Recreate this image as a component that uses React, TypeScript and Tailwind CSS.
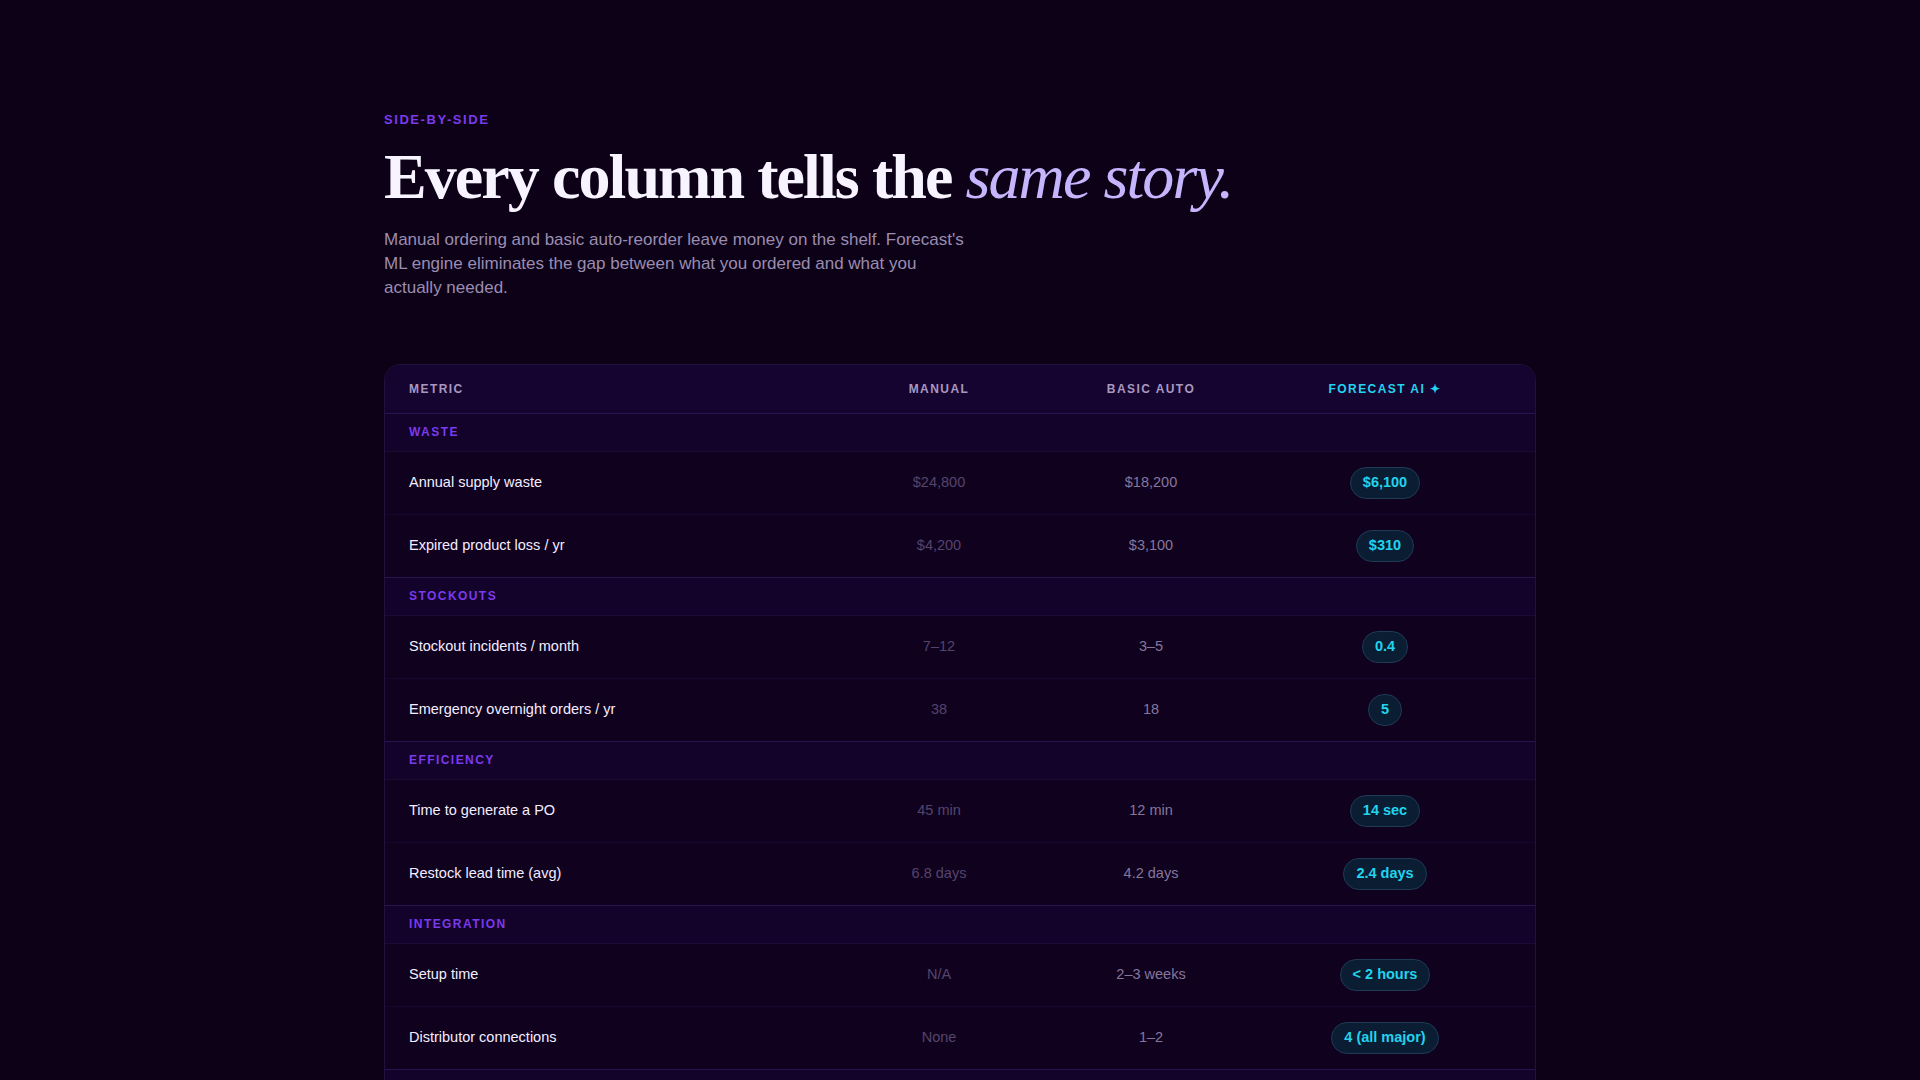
import React from 'react';

const sections = [
  {
    name: 'Waste',
    rows: [
      ['Annual supply waste', '$24,800', '$18,200', '$6,100'],
      ['Expired product loss / yr', '$4,200', '$3,100', '$310'],
    ],
  },
  {
    name: 'Stockouts',
    rows: [
      ['Stockout incidents / month', '7–12', '3–5', '0.4'],
      ['Emergency overnight orders / yr', '38', '18', '5'],
    ],
  },
  {
    name: 'Efficiency',
    rows: [
      ['Time to generate a PO', '45 min', '12 min', '14 sec'],
      ['Restock lead time (avg)', '6.8 days', '4.2 days', '2.4 days'],
    ],
  },
  {
    name: 'Integration',
    rows: [
      ['Setup time', 'N/A', '2–3 weeks', '< 2 hours'],
      ['Distributor connections', 'None', '1–2', '4 (all major)'],
    ],
  },
  {
    name: 'ROI',
    rows: [
      ['Payback period', 'Never', '9 months', '6 weeks'],
      ['Net annual savings', '$0', '$7,700', '$22,600'],
    ],
  },
];

const grid = 'grid grid-cols-[448px_212px_212px_256px] items-center';

const App: React.FC = () => {
  return (
    <div className="min-h-screen bg-[#0d0118] font-[family-name:Liberation_Sans,Arial,sans-serif]">
      <div className="mx-auto w-[1152px] pt-[110px] pb-24">
        <p className="text-[13px] font-bold tracking-[0.12em] text-[#7c3aed] uppercase">Side-by-side</p>
        <h1 className="mt-3 font-[family-name:Liberation_Serif,Times_New_Roman,serif] text-[64px] leading-[1.1] font-bold tracking-[-0.03em] text-[#f7f3ff]">
          Every column tells the{' '}
          <span className="font-normal italic text-[#c4b5fd]">same story.</span>
        </h1>
        <p className="mt-4 max-w-[580px] text-[17px] leading-[24px] text-[#9a8db0]">
          Manual ordering and basic auto-reorder leave money on the shelf. Forecast's ML engine eliminates the gap between what you ordered and what you actually needed.
        </p>

        {/* Comparison table */}
        <div className="mt-[64px] overflow-hidden rounded-2xl border border-[#22103d] bg-[#10011f]">
          <div className={`${grid} h-[49px] border-b border-[#2a1450] bg-[#160430] text-[12px] font-bold tracking-[0.12em] uppercase`}>
            <div className="pl-6 text-[#a898c0]">Metric</div>
            <div className="text-center text-[#a898c0]">Manual</div>
            <div className="text-center text-[#a898c0]">Basic Auto</div>
            <div className="text-center text-[#22d3ee]">Forecast AI ✦</div>
          </div>
          {sections.map((s) => (
            <div key={s.name}>
              <div className="flex h-[38px] items-center border-b border-[#1c0936] bg-[#13022a] pl-6 text-[12px] font-bold tracking-[0.12em] text-[#7c3aed] uppercase">
                {s.name}
              </div>
              {s.rows.map((r, i) => (
                <div
                  key={r[0]}
                  className={`${grid} h-[63px] text-[14.5px] ${i === s.rows.length - 1 ? 'border-b border-[#2a1450]' : 'border-b border-[#180630]'}`}
                >
                  <div className="pl-6 text-[#f3eeff]">{r[0]}</div>
                  <div className="text-center text-[#54456b]">{r[1]}</div>
                  <div className="text-center text-[#85779c]">{r[2]}</div>
                  <div className="flex justify-center">
                    <span className="rounded-full border border-[#1e3a55] bg-[#0b1d33] px-[12px] py-[4px] text-[14.5px] font-bold text-[#22d3ee]">
                      {r[3]}
                    </span>
                  </div>
                </div>
              ))}
            </div>
          ))}
        </div>
      </div>
    </div>
  );
};

export default App;
